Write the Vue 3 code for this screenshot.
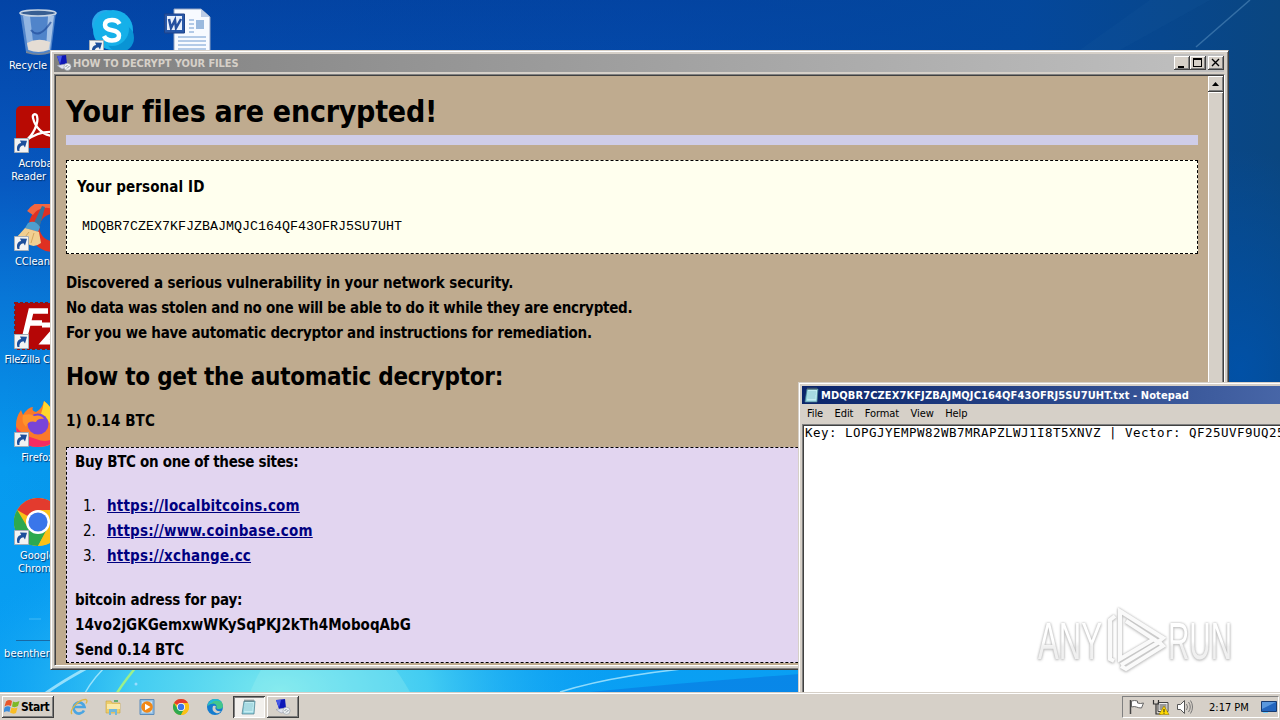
<template>
  <main class="desktop">
    <svg class="defs" width="0" height="0">
      <symbol id="chrome" viewBox="0 0 48 48">
        <circle cx="24" cy="24" r="24" fill="#fbc116" />
        <path d="M24 24 3.2 12A24 24 0 0 1 44.8 12Z" fill="#e33b2e" />
        <path d="M3.2 12A24 24 0 0 0 24 48L34 29 24 24 14 30Z" fill="#2da94f" />
        <path d="M24 12h20.8A24 24 0 0 1 24 48l10-18Z" fill="#fbc116" />
        <circle cx="24" cy="24" r="12" fill="#fff" />
        <circle cx="24" cy="24" r="9.6" fill="#3a76ea" />
      </symbol>
      <symbol id="notepad" viewBox="0 0 16 16">
        <path d="M3 2h11l-1 13H1z" fill="#8ed0dc" stroke="#4b7c8c" stroke-width=".7" />
        <path d="M4 3h9l-.8 10.500H3z" fill="#c5edf2" />
        <path d="M4 5h8M4 7h8M3.500 9h8M3.500 11h8" stroke="#74b7c6" stroke-width=".7" />
        <path d="M4 .5v2.500M6 .5v2.500M8 .5v2.500M10 .5v2.500M12 .5v2.500" stroke="#56666a" stroke-width=".9" />
      </symbol>
      <symbol id="hta" viewBox="0 0 16 16">
        <path d="M1 1l9-1 1 9-7 1z" fill="#0d18b8" />
        <path d="M1 1l5 0-2 8z" fill="#4658e8" />
        <path d="M1 10.500l9-1.500 4 3-8 2z" fill="#dfe3ee" stroke="#8b93a8" stroke-width=".5" />
        <circle cx="11.500" cy="11.800" r="3.600" fill="#edf0f2" stroke="#949ca6" stroke-width=".6" />
        <path d="M9.500 12l2-2M11 13.500l2.500-2.500" stroke="#6a7a88" stroke-width=".8" />
      </symbol>
      <symbol id="arrow" viewBox="0 0 15 15">
        <path d="M.5.5h14v14H.5z" fill="#f3f3f3" stroke="#a3adb8" />
        <path d="M3.500 13C2 8.500 4 5.500 7.200 5L6 2.500l7 .3-2 6.600-1.500-2.200C7 7.500 5 9.500 5.500 13z" fill="#1d4f9b" />
      </symbol>
    </svg>

    <svg class="wallpaper" viewBox="0 0 1280 720" preserveAspectRatio="none">
      <defs>
        <linearGradient id="sky" x1="0" y1="0" x2="0" y2="1">
          <stop offset="0" stop-color="#0344a6" />
          <stop offset=".25" stop-color="#0758c0" />
          <stop offset=".42" stop-color="#0878d8" />
          <stop offset=".65" stop-color="#069aef" />
          <stop offset="1" stop-color="#0aa0f4" />
        </linearGradient>
        <linearGradient id="shade" x1="0" y1="0" x2="1" y2="0">
          <stop offset="0" stop-color="#00408a" stop-opacity="0" />
          <stop offset=".5" stop-color="#03449a" stop-opacity=".3" />
          <stop offset=".8" stop-color="#04489b" stop-opacity=".9" />
          <stop offset="1" stop-color="#0a4680" />
        </linearGradient>
        <radialGradient id="glow">
          <stop offset="0" stop-color="#7be8ee" />
          <stop offset=".45" stop-color="#4cd4f2" stop-opacity=".85" />
          <stop offset="1" stop-color="#10a2f4" stop-opacity="0" />
        </radialGradient>
        <radialGradient id="deep">
          <stop offset="0" stop-color="#0052aa" stop-opacity=".9" />
          <stop offset="1" stop-color="#0052aa" stop-opacity="0" />
        </radialGradient>
      </defs>
      <path d="M0 0h1280v720H0z" fill="url(#sky)" />
      <path d="M0 0h1280v500H0z" fill="url(#shade)" />
      <ellipse cx="1240" cy="370" rx="150" ry="220" fill="url(#deep)" />
      <ellipse cx="280" cy="690" rx="330" ry="170" fill="url(#glow)" />
      <path d="M250 692q30-70 75-70t85 70z" fill="#a8f2ee" opacity=".25" />
      <path d="M46 693Q70 676 112 655" class="ray wide" />
      <path d="M85 693Q93 678 112 660" class="ray" />
      <path d="M117 693Q125 680 142 660" stroke="#9cf08a" stroke-width="2.500" fill="none" />
      <path d="M560 692Q620 673 725 665" class="ray" />
      <path d="M590 692Q690 682 800 674V692z" fill="#0765d8" opacity=".4" />
      <path d="M1196 47 1250 0" stroke="#5890c0" stroke-width="1.500" opacity=".55" />
      <path d="M1080 50 1150 0h60l-90 50z" fill="#2168a5" opacity=".13" />
      <circle cx="136" cy="684" r="1.500" fill="#9df" />
    </svg>

    <section class="icons">
      <div class="shortcut" v-for="icon in icons" :key="icon.name" :class="icon.name">
        <div class="pic">
          <svg v-if="icon.name === 'bin'" viewBox="0 0 48 48">
            <path d="M6 4h36l-5 40q-13 5-25 0z" fill="#5e8fd0" opacity=".85" />
            <path d="M9 8l5 34h6L16 8z" fill="#b4cfee" opacity=".65" />
            <path d="M34 8l-2 34h4l4-34z" fill="#cadef4" opacity=".7" />
            <path d="M17 22q8 10 20-8" fill="none" stroke="#224f9c" stroke-width="2" opacity=".7" />
            <path d="M13 35q11-6 23-1l-1.500 8q-10 4-20 0z" fill="#e5ddd4" />
            <ellipse cx="24" cy="5" rx="18" ry="3" fill="#375e92" stroke="#c8d5e4" stroke-width="1.600" />
            <path d="M12 43q12 5 25 0v2q-12 4-25 0z" fill="#778698" />
          </svg>
          <svg v-else-if="icon.name === 'skype'" viewBox="0 0 48 48">
            <circle cx="17" cy="16" r="14" fill="#28a8ea" />
            <circle cx="24" cy="22" r="20" fill="#16b0e9" />
            <circle cx="31" cy="30" r="14" fill="#0994d5" />
            <circle cx="23" cy="21" r="17" fill="#16b0e9" />
            <path d="M30.500 16q-2-4-7.500-4-7 0-7 5 0 4 7 5.200t7 5.300q0 5-7 5-6 0-8-4.500" fill="none" stroke="#fff" stroke-width="4.500" />
          </svg>
          <svg v-else-if="icon.name === 'word'" viewBox="0 0 48 48">
            <path d="M10 1h27l9 8v38H10z" fill="#f7faff" stroke="#92a3c2" />
            <path d="M37 1v8h9z" fill="#bccce6" />
            <path d="M25 12h5M25 16h5M25 20h5M25 24h5M14 29h28M14 33h28M14 37h28M14 41h28" stroke="#6e9ad0" />
            <path d="M32 12h8v9h-8z" fill="#9ab9de" />
            <path d="M.500 6h20v19H.500z" fill="#2858a8" stroke="#1e438a" />
            <path d="M3 8h15v14H3z" fill="#e8effb" />
            <path d="M5 11l2 9 4-8 1 8 5-9" fill="none" stroke="#244f9f" stroke-width="2.500" />
          </svg>
          <svg v-else-if="icon.name === 'acrobat'" viewBox="0 0 48 48">
            <rect x="2" y="0" width="50" height="42" rx="5" fill="#b80a03" />
            <path d="M11 35c8-5 14-18 12-25-1-3-5-2-4 2 2 9 10 18 21 18 4 0 4-4-1-4-10-1-21 4-28 9" fill="none" stroke="#fff" stroke-width="2.300" />
          </svg>
          <svg v-else-if="icon.name === 'ccleaner'" viewBox="0 0 48 48">
            <path d="M50 8A19 19 0 1 0 50 39" fill="none" stroke="#df3022" stroke-width="11" />
            <path d="M16 9A20 20 0 0 1 44 4" fill="none" stroke="#f26640" stroke-width="7" />
            <path d="M28 2l3 1-6 22-6-4z" fill="#32749f" />
            <path d="M14 19q7-4 12 4l-2 5-13-4z" fill="#4f9fce" />
            <path d="M11 24l14 4 2 11q-8 6-14 0-5 4-11-5z" fill="#f1cf91" />
            <path d="M15 28l-7 9M20 29l-3 10" stroke="#d4a65e" />
          </svg>
          <svg v-else-if="icon.name === 'filezilla'" viewBox="0 0 48 48">
            <path d="M1 1h47v46H1z" fill="#b50606" stroke="#8d1616" stroke-width="2" stroke-dasharray="3 2" />
            <path d="M11 34 17 9h17M14 21h14" fill="none" stroke="#fff" stroke-width="5.500" />
            <path d="M28 23h17L30 40h17" fill="none" stroke="#fff" stroke-width="5" />
          </svg>
          <svg v-else-if="icon.name === 'firefox'" viewBox="0 0 48 48">
            <path d="M30 1q8 6 8 12 10 8 9 17-3 17-23 17Q2 46 2 25q0-8 5-15l2 5q5-8 10-8-2 4 3 5 6-3 8-11z" fill="#fb7a28" />
            <path d="M30 1q8 6 8 12 9 8 9 17-2 7-8 9 2-15-12-25 2-6 3-13z" fill="#ffd62d" />
            <path d="M2 27q2 20 22 20 14 0 20-11-10 8-22 3Q8 35 2 27z" fill="#f62c62" />
            <circle cx="24" cy="24" r="10.500" fill="#7944d8" />
            <path d="M9 15q9-2 11 1 7-2 10 3-6-1-8 3-8-2-10 5Q7 22 9 15z" fill="#ff942b" />
          </svg>
          <svg v-else-if="icon.name === 'google'" viewBox="0 0 48 48"><use href="#chrome" /></svg>
          <svg v-else viewBox="0 0 48 48">
            <path d="M2 44.500h46" stroke="#1869a5" stroke-width="1.200" />
            <path d="M15 23h12" stroke="#42baf5" />
          </svg>
          <svg v-if="icon.link" class="link" viewBox="0 0 15 15"><use href="#arrow" /></svg>
        </div>
        <p v-for="line in icon.label" :key="line">{{ line }}</p>
      </div>
    </section>

    <section class="window ransom">
      <div class="titlebar inactive">
        <svg class="small"><use href="#hta" /></svg>
        <span class="caption">HOW TO DECRYPT YOUR FILES</span>
        <div class="buttons">
          <span class="winbtn"><svg viewBox="0 0 16 14"><path d="M4 10h6v2H4z" /></svg></span>
          <span class="winbtn"><svg viewBox="0 0 16 14"><path d="M3 2h9v9H3zM4 4v6h7V4z" fill-rule="evenodd" /></svg></span>
          <span class="winbtn close"><svg viewBox="0 0 16 14"><path d="M4 3l7 7M11 3l-7 7" stroke="#000" stroke-width="1.400" /></svg></span>
        </div>
      </div>
      <div class="client">
        <article class="note">
          <h1>Your files are encrypted!</h1>
          <div class="rule"></div>
          <div class="idbox">
            <b>Your personal ID</b>
            <pre>MDQBR7CZEX7KFJZBAJMQJC164QF43OFRJ5SU7UHT</pre>
          </div>
          <div class="text">
            <p class="l1">Discovered a serious vulnerability in your network security.</p>
            <p class="l2">No data was stolen and no one will be able to do it while they are encrypted.</p>
            <p class="l3">For you we have automatic decryptor and instructions for remediation.</p>
          </div>
          <h2>How to get the automatic decryptor:</h2>
          <p class="price">1) 0.14 BTC</p>
          <div class="paybox">
            <p class="buy">Buy BTC on one of these sites:</p>
            <ol>
              <li v-for="(site, i) in sites" :key="site"><span>{{ i + 1 }}.</span><a>{{ site }}</a></li>
            </ol>
            <p class="addr">bitcoin adress for pay:</p>
            <p class="wallet">14vo2jGKGemxwWKySqPKJ2kTh4MoboqAbG</p>
            <p class="send">Send 0.14 BTC</p>
          </div>
        </article>
        <div class="scrollbar">
          <span class="up"><svg viewBox="0 0 16 16"><path d="M4 10h7L7.500 6z" /></svg></span>
          <span class="thumb"></span>
        </div>
      </div>
    </section>

    <section class="window notepad">
      <div class="titlebar active">
        <svg class="small"><use href="#notepad" /></svg>
        <span class="caption">MDQBR7CZEX7KFJZBAJMQJC164QF43OFRJ5SU7UHT.txt - Notepad</span>
      </div>
      <nav class="menu">
        <span v-for="item in menu" :key="item">{{ item }}</span>
      </nav>
      <pre class="editor">Key: LOPGJYEMPW82WB7MRAPZLWJ1I8T5XNVZ | Vector: QF25UVF9UQ25</pre>
    </section>

    <svg class="watermark" viewBox="0 0 200 68">
      <defs>
        <linearGradient id="fade" x1="0" y1="0" x2="0" y2="1">
          <stop offset=".5" stop-color="#fff" />
          <stop offset=".6" stop-color="#f0f0f0" />
        </linearGradient>
      </defs>
      <text x="1" y="52" textLength="64" lengthAdjust="spacingAndGlyphs">ANY</text>
      <path d="M77 54 73 52V13l5-4" />
      <path d="M83 50V4l43 27-5 4L89 14" />
      <path d="M83 13v39l34-20M84 59l5 3 37-23-4-4-38 23" />
      <text x="131" y="52" textLength="64" lengthAdjust="spacingAndGlyphs">RUN</text>
    </svg>

    <footer class="taskbar">
      <div class="start">
        <svg viewBox="0 0 16 16">
          <path d="M2 2.500q3-2.500 6-.5L7 7Q4 5.500.5 7.500z" fill="#e9572b" />
          <path d="M9 2.500q3 1.500 6.500-.5L14 7q-3 2-6 .5z" fill="#7db928" />
          <path d="M.5 8.500q3-2 6-.5L5.500 13q-3-1.500-6 .5z" fill="#3c8ddb" />
          <path d="M7.500 8.500q3 1.500 6 0L12 14q-3 1.500-6-.5z" fill="#f9bd25" />
        </svg>
        <span>Start</span>
      </div>
      <div class="quick">
        <span>
          <svg viewBox="0 0 18 18">
            <path d="M14 12.500A5.500 5.500 0 1 1 14.500 9H5" fill="none" stroke="#4aa5e2" stroke-width="2.700" />
            <path d="M2 16C-1 13 8 1 16 1.500q2 1 0 4" fill="none" stroke="#e0b741" stroke-width="1.300" />
          </svg>
        </span>
        <span>
          <svg viewBox="0 0 18 18">
            <path d="M2 3h5l1 2h8v10H2z" fill="#edcd6b" stroke="#c9a441" stroke-width=".6" />
            <path d="M3 6h13v5H3z" fill="#fae9a8" />
            <path d="M5 17v-6h8v6h-2v-3H7v3z" fill="#72b8db" />
            <path d="M10 2h4v2h-4z" fill="#63ad70" />
          </svg>
        </span>
        <span>
          <svg viewBox="0 0 18 18">
            <path d="M2 1.500h14v15H2z" fill="#94bfe4" stroke="#5c8dbc" />
            <path d="M4 3.500h10v11H4z" fill="#d1e6f5" />
            <circle cx="9" cy="9" r="5.800" fill="#f18818" />
            <path d="M7 5.800 12.500 9 7 12.200z" fill="#fff" />
          </svg>
        </span>
        <span><svg class="mini" viewBox="0 0 48 48"><use href="#chrome" /></svg></span>
        <span>
          <svg viewBox="0 0 18 18">
            <circle cx="9" cy="9" r="8" fill="#147ccf" />
            <path d="M1.500 8Q3 1 9.500 1q7 .5 7.500 7 0 3-4 3-3 0-2.500-2 .5-3-3-3.500Q4 5.500 1.500 8z" fill="#43c68b" />
            <path d="M1.500 8Q3 1 9.500 1q4 0 6 3-7-3-10 1-2 0-4 3z" fill="#21b8da" />
            <path d="M7 8q-2 5 3 7 3 1 5-2-4 1-5.500-2-.5-1.500.5-2.500-1-1-3-.5z" fill="#d4cfc8" />
          </svg>
        </span>
      </div>
      <div class="task pressed"><svg><use href="#notepad" /></svg></div>
      <div class="task"><svg><use href="#hta" /></svg></div>
      <div class="tray">
        <svg class="flag" viewBox="0 0 18 18">
          <path d="M2.500 2v14" stroke="#444" stroke-width="1.500" />
          <path d="M3.500 3q3-1 6 0v2q3 1 6 0l-2 5q-3 0-5-1-2-1-5 0z" fill="#fff" stroke="#666" />
        </svg>
        <svg class="net" viewBox="0 0 18 18">
          <path d="M6 4.500h10v9H6z" fill="#eee" stroke="#444" />
          <path d="M7.500 6h7v6h-7z" fill="#999" />
          <path d="M1.500 2v4h5V2M4 6v10h5" fill="none" stroke="#333" stroke-width="1.200" />
          <path d="M12 8l5 8.500H7z" fill="#ffd900" stroke="#9b7c00" stroke-width=".6" />
          <path d="M12 11v3M12 14.700v1" stroke="#222" />
        </svg>
        <svg class="vol" viewBox="0 0 18 18">
          <path d="M1.500 6.500h3l4-4v13l-4-4h-3z" fill="#fff" stroke="#555" />
          <path d="M10.500 6q2 3 0 6M12.500 4q3.500 5 0 10M14.500 2.500q4 6.500 0 13" fill="none" stroke="#777" />
        </svg>
        <time>2:17 PM</time>
        <svg class="show" viewBox="0 0 16 14">
          <path d="M.5 1.500h15v10H.500z" fill="#2466be" stroke="#173b70" />
          <path d="M1 2h14l-14 7z" fill="#5a98dd" />
          <path d="M2 12.500h5" stroke="#79d1ff" />
        </svg>
      </div>
    </footer>
  </main>
</template>

<script setup>
  import {ref} from 'vue'

  const icons = ref([
    {name: "bin", label: ["Recycle Bin"]},
    {name: "acrobat", label: ["Acrobat", "Reader DC"], link: true},
    {name: "ccleaner", label: ["CCleaner"], link: true},
    {name: "filezilla", label: ["FileZilla Client"], link: true},
    {name: "firefox", label: ["Firefox"], link: true},
    {name: "google", label: ["Google", "Chrome"], link: true},
    {name: "file", label: ["beenthere.rtf"]},
    {name: "skype", label: [], link: true},
    {name: "word", label: []}
  ])
  const sites = ref([
    "https://localbitcoins.com",
    "https://www.coinbase.com",
    "https://xchange.cc"
  ])
  const menu = ref(["File", "Edit", "Format", "View", "Help"])
</script>

<style>
  body{
    margin: 0;
    overflow: hidden;
  }
</style>

<style scoped>
  .desktop{
    position: relative;
    width: 1280px;
    height: 720px;
    overflow: hidden;
    background: #0758c0;
    color: #000;
    font-family: "DejaVu Sans Condensed", "DejaVu Sans", sans-serif;
    font-stretch: condensed;
    font-size: 11px;
    user-select: none;
  }
  .desktop *{
    box-sizing: border-box;
  }
  svg{
    display: block;
    flex: none;
  }
  p, h1, h2, pre, ol{
    margin: 0;
    padding: 0;
    white-space: nowrap;
  }
  .defs{
    position: absolute;
  }
  .wallpaper{
    position: absolute;
    width: 1280px;
    height: 720px;
  }
  .ray{
    fill: none;
    stroke: #c8f4ff;
    stroke-width: 1.5;
    opacity: .7;
  }
  .ray.wide{
    stroke-width: 3;
  }

  /* desktop shortcuts */
  .icons{
    position: absolute;
    top: 8px;
    left: 0;
    display: grid;
    grid-template-rows: repeat(7, 98px);
    grid-auto-flow: column;
    grid-auto-columns: 75px;
  }
  .shortcut{
    display: flex;
    flex-direction: column;
    align-items: center;
    color: #fff;
    text-shadow: 1px 1px 1px #00306b;
  }
  .shortcut.word{
    grid-area: 1 / 3;
  }
  .shortcut.filezilla{
    letter-spacing: -0.2px;
  }
  .shortcut.file{
    letter-spacing: 0.1px;
  }
  .shortcut p{
    line-height: 13px;
  }
  .pic{
    position: relative;
    width: 48px;
    height: 48px;
    margin-bottom: 3px;
    flex: none;
  }
  .pic svg{
    width: 48px;
    height: 48px;
  }
  .pic .link{
    position: absolute;
    left: 0;
    bottom: 1px;
    width: 15px;
    height: 15px;
  }

  /* window frames */
  .window{
    position: absolute;
    background: #d6d0c8;
    display: flex;
    flex-direction: column;
  }
  .ransom{
    left: 50px;
    top: 50px;
    width: 1179px;
    height: 620px;
    padding: 2px 3px 3px 2px;
    border: 1px solid #d6d0c8;
    border-right-color: #404040;
    border-bottom-color: #404040;
    box-shadow: inset 1px 1px #fff, inset -1px -1px #808080;
  }
  .titlebar{
    display: flex;
    align-items: center;
    height: 18px;
    margin: 1px 1px 0;
    flex: none;
    font-weight: bold;
    font-size: 11px;
  }
  .inactive{
    background: linear-gradient(90deg, #808080, #c0c0c0);
    color: #d6d0c8;
  }
  .active{
    background: linear-gradient(90deg, #0a246a, #5878b8);
    color: #fff;
  }
  .small{
    width: 16px;
    height: 16px;
    margin: 0 1px 0 2px;
  }
  .caption{
    flex: 1;
    white-space: nowrap;
    letter-spacing: 0.11px;
  }
  .inactive .caption{
    letter-spacing: -0.12px;
  }
  .buttons{
    display: flex;
  }
  .winbtn{
    width: 16px;
    height: 14px;
    background: #d6d0c8;
    box-shadow: inset -1px -1px #404040, inset 1px 1px #fff, inset -2px -2px #808080;
  }
  .winbtn svg{
    width: 16px;
    height: 14px;
  }
  .winbtn.close{
    margin-left: 2px;
  }
  .client{
    display: flex;
    flex: 1;
    min-height: 0;
    margin-top: 2px;
    margin-left: 1px;
    border: 1px solid #808080;
    border-right-color: #fff;
    border-bottom-color: #fff;
    box-shadow: inset 1px 1px #404040;
  }

  /* note contents */
  .note{
    flex: 1;
    margin: 1px 0 0 1px;
    padding: 16px 10px 0;
    overflow: hidden;
    background: #bfab8f;
    font-size: 15px;
    font-weight: bold;
    line-height: 25px;
  }
  h1{
    font-size: 30px;
    line-height: 39px;
    letter-spacing: -0.24px;
  }
  .rule{
    height: 10px;
    margin: 4px 0 15px;
    background: #cfcde8;
  }
  .idbox{
    height: 94px;
    padding: 14px 10px;
    border: 1px dashed #000;
    background: #ffffee;
  }
  .idbox b{
    letter-spacing: 0.12px;
  }
  .idbox pre{
    margin: 14px 0 0 5px;
    font: 13.33px/25px "Liberation Mono", monospace;
  }
  .text{
    margin-top: 17px;
  }
  .l1{
    letter-spacing: -0.12px;
  }
  .l2{
    letter-spacing: -0.27px;
  }
  .l3{
    letter-spacing: -0.24px;
  }
  h2{
    margin: 14px 0 15px;
    font-size: 24px;
    line-height: 34px;
    letter-spacing: -0.27px;
  }
  .price{
    letter-spacing: 0.12px;
  }
  .paybox{
    height: 216px;
    margin-top: 13px;
    padding: 2px 8px;
    border: 1px dashed #000;
    background: #e2d5f0;
  }
  .buy{
    letter-spacing: -0.3px;
  }
  .addr{
    letter-spacing: -0.17px;
  }
  .wallet{
    letter-spacing: 0.03px;
  }
  .send{
    letter-spacing: -0.08px;
  }
  ol{
    margin: 19px 0;
    list-style: none;
  }
  li{
    display: flex;
  }
  li span{
    width: 32px;
    padding-left: 8px;
    font-weight: normal;
  }
  a{
    color: #000080;
    text-decoration: underline;
    letter-spacing: 0.2px;
  }
  .scrollbar{
    width: 16px;
    margin-top: 1px;
    display: flex;
    flex-direction: column;
    background: #ebe8e3;
  }
  .up, .thumb{
    background: #d6d0c8;
    box-shadow: inset -1px -1px #404040, inset 1px 1px #fff, inset -2px -2px #808080;
  }
  .up{
    height: 16px;
  }
  .up svg{
    width: 16px;
    height: 16px;
  }
  .thumb{
    flex: 1;
  }

  /* notepad */
  .notepad{
    left: 798px;
    top: 382px;
    width: 620px;
    height: 340px;
    padding: 2px;
    border: 1px solid #d6d0c8;
    box-shadow: inset 1px 1px #fff;
  }
  .menu{
    display: flex;
    gap: 11.5px;
    height: 20px;
    padding-left: 6px;
    line-height: 20px;
    letter-spacing: -0.1px;
  }
  .editor{
    flex: 1;
    margin-left: 1px;
    padding-left: 2px;
    border: 1px solid #808080;
    box-shadow: inset 1px 1px #404040;
    background: #fff;
    font: 12.5px/15px "DejaVu Sans Mono", monospace;
    letter-spacing: 0.475px;
  }
  .watermark{
    position: absolute;
    left: 1037px;
    top: 607px;
    width: 200px;
    height: 68px;
    filter: drop-shadow(0 0 1px #bbb) drop-shadow(0 1px 1px #ccc);
  }
  .watermark text{
    fill: url(#fade);
    font: 52px "Liberation Sans", sans-serif;
  }
  .watermark path{
    fill: none;
    stroke: #fafafa;
    stroke-width: 4;
  }

  /* taskbar */
  .taskbar{
    position: absolute;
    left: 0;
    bottom: 0;
    width: 1280px;
    height: 28px;
    padding: 4px 1px 2px 2px;
    display: flex;
    align-items: stretch;
    background: #d6d0c8;
    box-shadow: inset 0 1px #d6d0c8, inset 0 2px #fff;
  }
  .start{
    display: flex;
    align-items: center;
    width: 52px;
    padding-left: 2px;
    gap: 1px;
    font-size: 12px;
    font-weight: bold;
    letter-spacing: -0.5px;
    box-shadow: inset -1px -1px #404040, inset 1px 1px #fff, inset -2px -2px #808080;
  }
  .start svg{
    width: 16px;
    height: 16px;
  }
  .quick{
    display: flex;
    margin-left: 8px;
  }
  .quick span{
    width: 34px;
    display: grid;
    place-items: center;
  }
  .quick svg{
    width: 18px;
    height: 18px;
  }
  .quick .mini{
    width: 16px;
    height: 16px;
  }
  .task{
    width: 32px;
    margin-right: 2px;
    display: grid;
    place-items: center;
    box-shadow: inset -1px -1px #404040, inset 1px 1px #fff, inset -2px -2px #808080;
  }
  .task.pressed{
    margin-left: 1px;
    background: #f2f0ed;
    box-shadow: inset 1px 1px #404040, inset -1px -1px #fff, inset 2px 2px #808080;
  }
  .task svg{
    width: 16px;
    height: 16px;
  }
  .tray{
    display: flex;
    align-items: center;
    width: 157px;
    margin-left: auto;
    padding-left: 5px;
    border: 1px solid #808080;
    border-right-color: #fff;
    border-bottom-color: #fff;
  }
  .tray svg{
    width: 18px;
    height: 18px;
    margin-right: 6px;
  }
  .tray time{
    width: 52px;
    margin-left: 9px;
    white-space: nowrap;
  }
  .tray .show{
    width: 16px;
    height: 14px;
    margin: 0;
  }
</style>
